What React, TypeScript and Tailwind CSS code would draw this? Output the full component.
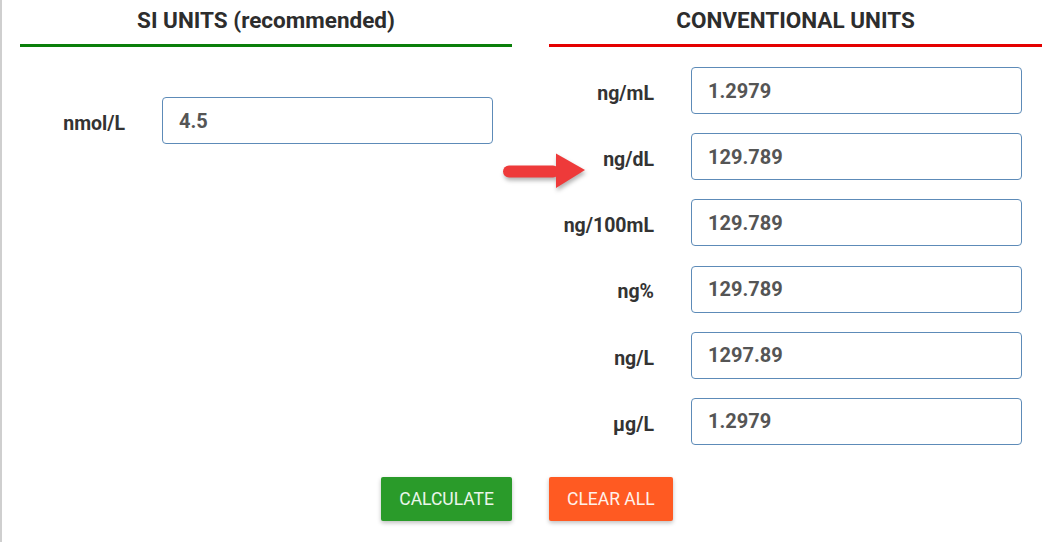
import React from "react";

const font = { fontFamily: "Roboto, 'Liberation Sans', Arial, sans-serif" };

function Row({ label, value }: { label: string; value: string }) {
  return (
    <div className="flex items-center h-[47px]">
      <div className="w-[105px] text-right pt-[6px] text-[19.5px] font-bold text-[#333]">{label}</div>
      <div className="ml-[37px] w-[331px] h-[47px] rounded-[4px] border border-[#5d8bb8] flex items-center pl-[16px] text-[20px] font-bold text-[#555] bg-white">
        {value}
      </div>
    </div>
  );
}

export default function App() {
  const conv: [string, string][] = [
    ["ng/mL", "1.2979"],
    ["ng/dL", "129.789"],
    ["ng/100mL", "129.789"],
    ["ng%", "129.789"],
    ["ng/L", "1297.89"],
    ["µg/L", "1.2979"],
  ];
  return (
    <div className="relative w-[1053px] h-[542px] bg-white border-l-2 border-[#cfcfcf] overflow-hidden" style={font}>
      <div className="pl-[18px] pr-[11px]">
        <div className="grid grid-cols-[492px_493px] gap-x-[37px]">
          <div className="flex flex-col">
            <div className="h-[47px] border-b-[3px] border-[#0a7f0a] text-center pt-[5px]">
              <span className="text-[22.5px] leading-[30px] font-bold text-[#2d2d2d]">SI UNITS (recommended)</span>
            </div>
            <div className="mt-[50px]">
              <Row label="nmol/L" value="4.5" />
            </div>
          </div>
          <div className="flex flex-col">
            <div className="h-[47px] border-b-[3px] border-[#e40000] text-center pt-[5px]">
              <span className="text-[22.5px] leading-[30px] font-bold text-[#2d2d2d]">CONVENTIONAL UNITS</span>
            </div>
            <div className="mt-[20px] flex flex-col gap-[19.2px]">
              {conv.map(([l, v]) => (
                <Row key={l} label={l} value={v} />
              ))}
            </div>
          </div>
        </div>
        <div className="grid grid-cols-[492px_493px] gap-x-[37px] mt-[32px]">
          <div className="flex justify-end">
            <button className="h-[44px] px-[18px] rounded-[2px] bg-[#2a9b2a] text-[#eaf6ea] text-[17.5px] uppercase shadow-[0_2px_4px_rgba(0,0,0,0.25)]">
              Calculate
            </button>
          </div>
          <div className="flex justify-start">
            <button className="h-[44px] px-[18px] rounded-[2px] bg-[#ff5a22] text-[#fff1ea] text-[17.5px] uppercase shadow-[0_2px_4px_rgba(0,0,0,0.25)]">
              Clear All
            </button>
          </div>
        </div>
      </div>
      <svg
        className="absolute left-[498px] top-[148px]"
        width="90"
        height="46"
        viewBox="0 0 90 46"
        style={{ filter: "drop-shadow(1px 3px 2px rgba(0,0,0,0.3))" }}
      >
        <rect x="3" y="17.5" width="56" height="12" rx="6" fill="#ee3a3a" />
        <polygon points="56,5.5 85,22 56,40" fill="#ee3a3a" />
      </svg>
    </div>
  );
}
